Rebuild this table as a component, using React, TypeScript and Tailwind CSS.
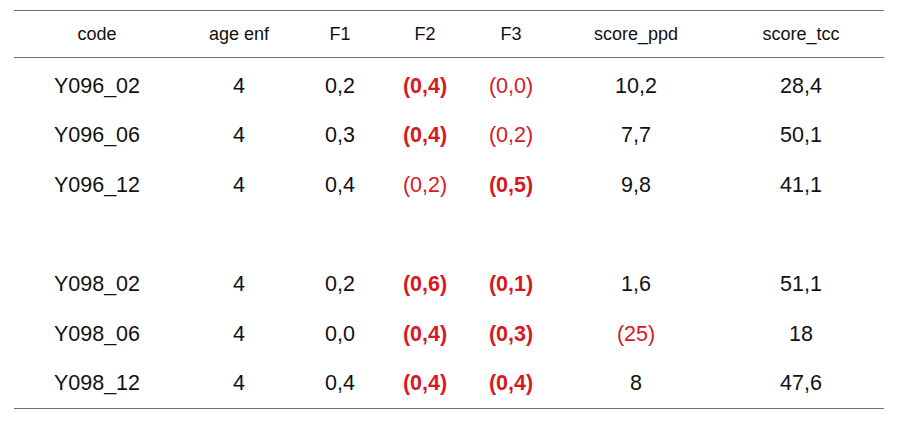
import React from 'react';

type Cell = { v: string; red?: boolean; bold?: boolean };

const COLS = [
  { key: 'code', w: 'w-[166px]' },
  { key: 'age enf', w: 'w-[118px]' },
  { key: 'F1', w: 'w-[84px]' },
  { key: 'F2', w: 'w-[86px]' },
  { key: 'F3', w: 'w-[86px]' },
  { key: 'score_ppd', w: 'w-[164px]' },
  { key: 'score_tcc', w: 'w-[166px]' },
];

const R = (v: string): Cell => ({ v, red: true });
const RB = (v: string): Cell => ({ v, red: true, bold: true });
const N = (v: string): Cell => ({ v });

const ROWS: (Cell[] | null)[] = [
  [N('Y096_02'), N('4'), N('0,2'), RB('(0,4)'), R('(0,0)'), N('10,2'), N('28,4')],
  [N('Y096_06'), N('4'), N('0,3'), RB('(0,4)'), R('(0,2)'), N('7,7'), N('50,1')],
  [N('Y096_12'), N('4'), N('0,4'), R('(0,2)'), RB('(0,5)'), N('9,8'), N('41,1')],
  null,
  [N('Y098_02'), N('4'), N('0,2'), RB('(0,6)'), RB('(0,1)'), N('1,6'), N('51,1')],
  [N('Y098_06'), N('4'), N('0,0'), RB('(0,4)'), RB('(0,3)'), R('(25)'), N('18')],
  [N('Y098_12'), N('4'), N('0,4'), RB('(0,4)'), RB('(0,4)'), N('8'), N('47,6')],
];

export default function App() {
  return (
    <div className="w-[900px] h-[422px] bg-white pt-[10px] pl-[14px] font-['Liberation_Sans',Arial,sans-serif]">
      <div className="w-[870px] border-t border-b border-[#707070]">
        <div className="flex h-[47px] items-center border-b border-[#707070] text-[18px] text-[#111]">
          {COLS.map(c => (
            <div key={c.key} className={`${c.w} text-center`}>{c.key}</div>
          ))}
        </div>
        <div className="pt-[3px]">
          {ROWS.map((row, i) => (
            <div key={i} className="flex h-[49.6px] items-center text-[21.5px] text-[#111]">
              {row &&
                row.map((cell, j) => (
                  <div
                    key={j}
                    className={`${COLS[j].w} text-center ${cell.red ? 'text-[#d7191f]' : ''} ${cell.bold ? 'font-bold' : ''}`}
                  >
                    {cell.v}
                  </div>
                ))}
            </div>
          ))}
        </div>
      </div>
    </div>
  );
}
